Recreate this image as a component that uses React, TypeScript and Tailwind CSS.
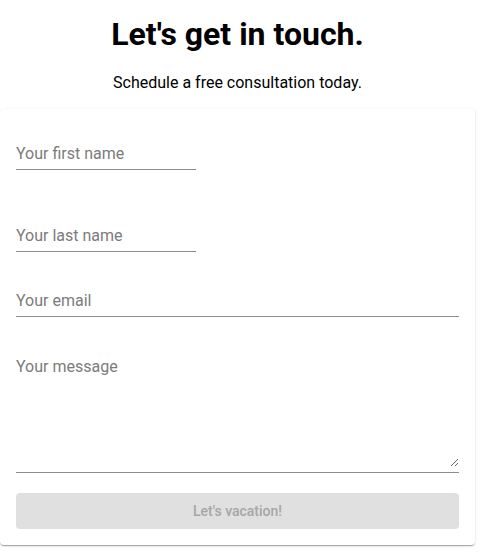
const shadow =
  "shadow-[0px_2px_1px_-1px_rgba(0,0,0,0.2),0px_1px_1px_0px_rgba(0,0,0,0.14),0px_1px_3px_0px_rgba(0,0,0,0.12)]";

const inputClass =
  "block w-full h-[31px] pt-[3px] pb-[5px] border-b border-[#8c8c8c] bg-transparent text-base text-black outline-none placeholder:text-[#7b7b7b]";

export default function App() {
  return (
    <div className="min-h-screen bg-white font-['Roboto',sans-serif]">
      <div className="w-[475px]">
        <h1 className="pt-[15px] text-center text-[32px] font-bold leading-[38.4px] text-black">
          Let's get in touch.
        </h1>
        <p className="mt-[18px] text-center text-base leading-6 text-black">
          Schedule a free consultation today.
        </p>

        <form className={`mt-[14px] rounded bg-white px-4 pt-[30px] pb-4 ${shadow}`}>
          <div className="w-[180px]">
            <input className={inputClass} placeholder="Your first name" />
          </div>
          <div className="mt-[51px] w-[180px]">
            <input className={inputClass} placeholder="Your last name" />
          </div>
          <div className="mt-[34px]">
            <input className={inputClass} placeholder="Your email" />
          </div>
          <div className="mt-[34px] border-b border-[#8c8c8c] pt-[4px] pb-[5px]">
            <textarea
              className="block h-[112px] w-full bg-transparent text-base leading-[23px] text-black outline-none placeholder:text-[#7b7b7b]"
              placeholder="Your message"
            />
          </div>
          <button
            type="button"
            disabled
            className="mt-[20px] flex h-[36px] w-full items-center justify-center rounded bg-[#e0e0e0] pb-[1px] text-sm font-medium text-[#a6a6a6]"
          >
            Let's vacation!
          </button>
        </form>
      </div>
    </div>
  );
}
